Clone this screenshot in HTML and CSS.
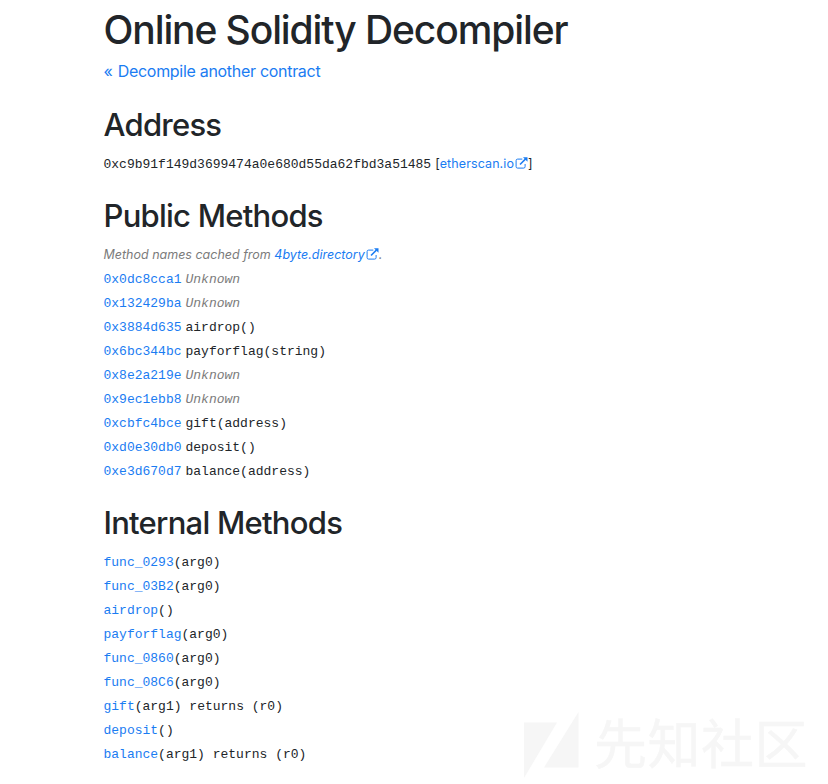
FILE: index.html
```html
<!DOCTYPE html>
<html lang="en">
<head>
<meta charset="utf-8">
<title>Online Solidity Decompiler</title>
<link rel="stylesheet" href="styles.css">
</head>
<body>
<svg class="defs" width="0" height="0" aria-hidden="true">
  <symbol id="external" viewBox="0 0 13 12">
    <path d="M7.3 2.1H2.6Q1.1 2.1 1.1 3.6V9.6Q1.1 11.1 2.6 11.1H8.6Q10.1 11.1 10.1 9.6V7" fill="none" stroke="currentColor" stroke-width="1"/>
    <path d="M5 7.5 10.6 1.9" fill="none" stroke="currentColor" stroke-width="1.5"/>
    <path d="M8 .2H12.5V4.7Z" fill="currentColor"/>
  </symbol>
</svg>
<main class="container">
  <h1>Online Solidity Decompiler</h1>
  <a class="back" href="#">«&nbsp;<span>Decompile another contract</span></a>

  <h2 class="address-title">Address</h2>
  <div class="row"><code>0xc9b91f149d3699474a0e680d55da62fbd3a51485</code><span class="explorer">[<a href="#">etherscan.io<svg class="icon"><use href="#external"/></svg></a>]</span></div>

  <h2>Public Methods</h2>
  <div class="row note">Method names cached from <a href="#">4byte.directory<svg class="icon"><use href="#external"/></svg></a>.</div>
  <div class="row"><a class="hash" href="#">0x0dc8cca1</a><i>Unknown</i></div>
  <div class="row"><a class="hash" href="#">0x132429ba</a><i>Unknown</i></div>
  <div class="row"><a class="hash" href="#">0x3884d635</a><code>airdrop()</code></div>
  <div class="row"><a class="hash" href="#">0x6bc344bc</a><code>payforflag(string)</code></div>
  <div class="row"><a class="hash" href="#">0x8e2a219e</a><i>Unknown</i></div>
  <div class="row"><a class="hash" href="#">0x9ec1ebb8</a><i>Unknown</i></div>
  <div class="row"><a class="hash" href="#">0xcbfc4bce</a><code>gift(address)</code></div>
  <div class="row"><a class="hash" href="#">0xd0e30db0</a><code>deposit()</code></div>
  <div class="row"><a class="hash" href="#">0xe3d670d7</a><code>balance(address)</code></div>

  <h2>Internal Methods</h2>
  <div class="row"><code><a href="#">func_0293</a>(arg0)</code></div>
  <div class="row"><code><a href="#">func_03B2</a>(arg0)</code></div>
  <div class="row"><code><a href="#">airdrop</a>()</code></div>
  <div class="row"><code><a href="#">payforflag</a>(arg0)</code></div>
  <div class="row"><code><a href="#">func_0860</a>(arg0)</code></div>
  <div class="row"><code><a href="#">func_08C6</a>(arg0)</code></div>
  <div class="row"><code><a href="#">gift</a>(arg1) returns (r0)</code></div>
  <div class="row"><code><a href="#">deposit</a>()</code></div>
  <div class="row"><code><a href="#">balance</a>(arg1) returns (r0)</code></div>
</main>
<div class="watermark" lang="zh-CN">
  <svg width="56" height="70" viewBox="0 0 56 70"><path d="M0 10.5H33L0 66ZM54.500 0V55.500H20Z" fill="currentColor"/></svg>
  <span>先知社区</span>
</div>
</body>
</html>
```
FILE: styles.css
```css
* { box-sizing: border-box; }
body {
  margin: 0;
  height: 784px;
  overflow: hidden;
  background: #fff;
  color: #212529;
  font: 16px/24px Inter, "Liberation Sans", sans-serif;
}
.defs { position: absolute; }
.container { padding: 6px 0 0 103.5px; white-space: nowrap; }
h1, h2 { margin: 0 0 8px; font-weight: 500; }
h1 { font-size: 39px; line-height: 48px; margin-bottom: 5px; letter-spacing: -1.1px; }
h2 { font-size: 31px; line-height: 38px; margin: 20px 0 9px; letter-spacing: -0.75px; }
.address-title { margin-top: 23px; }
a { color: #1a7cf2; text-decoration: none; }
.back { display: block; width: max-content; letter-spacing: -0.3px; }
.back span { margin-left: 1px; }
.row { display: flex; height: 24px; font-size: 13px; }
code, .hash, .row i {
  font-family: "Liberation Mono", monospace;
  font-size: 13px;
  white-space: pre;
}
.hash { margin-right: 4px; }
.row i, .note { color: #7b7b7b; }
.note { display: block; font-size: 12.5px; font-style: italic; line-height: 21px; letter-spacing: 0; }
.explorer { margin-left: 4px; font-size: 12.5px; line-height: 21px; letter-spacing: 0.1px; }
.icon { width: 13px; height: 12px; margin-left: 1px; vertical-align: -1px; }
.watermark {
  position: absolute;
  left: 524px;
  top: 712px;
  display: flex;
  color: #f6f6f6;
  font: 400 53px/59px "Noto Sans CJK SC", sans-serif;
}
.watermark span { margin-left: 14px; letter-spacing: 0.5px; -webkit-text-stroke: 0.5px #f6f6f6; }
```
